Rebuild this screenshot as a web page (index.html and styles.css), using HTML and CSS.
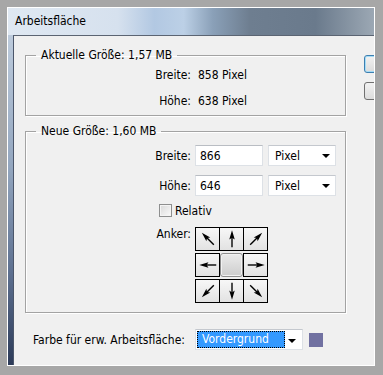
FILE: index.html
```html
<!DOCTYPE html>
<html lang="de">
<head>
    <meta charset="UTF-8">
    <title>Arbeitsfläche</title>
    <link rel="stylesheet" href="styles.css">
</head>
<body>

<svg class="defs" width="0" height="0" aria-hidden="true">
    <defs>
        <g id="arr">
            <line x1="12" y1="21" x2="12" y2="9" stroke="#000" stroke-width="1.5"/>
            <polygon points="12,2.5 9,12.5 12,10.5 15,12.5" fill="#000"/>
        </g>
    </defs>
</svg>

<div class="screen">
    <div class="window">
        <div class="titlebar">Arbeitsfläche</div>
        <div class="frame">
            <div class="frame-edge"></div>
            <div class="content">
                <div class="main">
                    <fieldset class="group group-current">
                        <legend>Aktuelle Größe: 1,57 MB</legend>
                        <div class="row">
                            <span class="label">Breite:</span>
                            <span class="value">858 Pixel</span>
                        </div>
                        <div class="row">
                            <span class="label">Höhe:</span>
                            <span class="value">638 Pixel</span>
                        </div>
                    </fieldset>

                    <fieldset class="group group-new">
                        <legend>Neue Größe: 1,60 MB</legend>
                        <div class="row row-input">
                            <label class="label" for="newW">Breite:</label>
                            <input class="num" type="text" id="newW" value="866">
                            <div class="combo">
                                <select><option>Pixel</option></select>
                            </div>
                        </div>
                        <div class="row row-input">
                            <label class="label" for="newH">Höhe:</label>
                            <input class="num" type="text" id="newH" value="646">
                            <div class="combo">
                                <select><option>Pixel</option></select>
                            </div>
                        </div>
                        <div class="row row-check">
                            <input type="checkbox" id="relativ">
                            <label for="relativ">Relativ</label>
                        </div>
                        <div class="row row-anchor">
                            <span class="label">Anker:</span>
                            <div class="anchor">
                                <div class="anchor-row">
                                    <span class="cell"><svg viewBox="0 0 24 24"><use href="#arr" transform="rotate(-45 12 12)"/></svg></span>
                                    <span class="cell"><svg viewBox="0 0 24 24"><use href="#arr"/></svg></span>
                                    <span class="cell"><svg viewBox="0 0 24 24"><use href="#arr" transform="rotate(45 12 12)"/></svg></span>
                                </div>
                                <div class="anchor-row">
                                    <span class="cell"><svg viewBox="0 0 24 24"><use href="#arr" transform="rotate(-90 12 12)"/></svg></span>
                                    <span class="cell center"></span>
                                    <span class="cell"><svg viewBox="0 0 24 24"><use href="#arr" transform="rotate(90 12 12)"/></svg></span>
                                </div>
                                <div class="anchor-row">
                                    <span class="cell"><svg viewBox="0 0 24 24"><use href="#arr" transform="rotate(-135 12 12)"/></svg></span>
                                    <span class="cell"><svg viewBox="0 0 24 24"><use href="#arr" transform="rotate(180 12 12)"/></svg></span>
                                    <span class="cell"><svg viewBox="0 0 24 24"><use href="#arr" transform="rotate(135 12 12)"/></svg></span>
                                </div>
                            </div>
                        </div>
                    </fieldset>

                    <div class="fill-row">
                        <span class="fill-label">Farbe für erw. Arbeitsfläche:</span>
                        <div class="combo combo-wide">
                            <span class="picked">Vordergrund</span>
                        </div>
                        <span class="swatch"></span>
                    </div>
                </div>

                <div class="buttons">
                    <button class="btn btn-default" aria-label="OK"></button>
                    <button class="btn" aria-label="Abbrechen"></button>
                </div>
            </div>
        </div>
    </div>
</div>

</body>
</html>
```

FILE: styles.css
```css
body {
    margin: 0;
    background-color: #a7a7a7;
    font-family: "DejaVu Sans Condensed", "DejaVu Sans", sans-serif;
    font-stretch: condensed;
    font-size: 12px;
    color: #000;
}

.defs {
    display: block;
    width: 0;
    height: 0;
}

.screen {
    width: 383px;
    height: 375px;
    box-sizing: border-box;
    padding: 7px 8px 9px 7px;
    overflow: hidden;
}

.window {
    height: 100%;
    box-sizing: border-box;
    border: 1px solid #fff;
    display: flex;
    flex-direction: column;
    overflow: hidden;
}

.titlebar {
    flex: none;
    height: 27px;
    line-height: 27px;
    padding-left: 7px;
    background: linear-gradient(90deg, #dfe8f2 0%, #d6e1ee 30%, #b2c8e2 40%, #bcd0e6 48%, #8aa0b8 56%, #6e7e90 66%, #6a7a8c 84%, #9ca8b4 100%);
}

.frame {
    flex: 1;
    display: flex;
    min-height: 0;
    min-width: 0;
}

.frame-edge {
    flex: none;
    width: 5px;
    background: linear-gradient(#bdcbdc, #93a6bf 40%, #5d7090 72%, #2c3a58);
}

.content {
    flex: 1;
    min-width: 0;
    display: flex;
    background-color: #f0f0f0;
    border-top: 1px solid #5b6472;
    border-left: 1px solid #4b566a;
    padding: 12px 0 0 11px;
    overflow: hidden;
}

.main {
    flex: none;
    width: 321px;
}

/* group boxes */
.group {
    margin: 0;
    padding: 0;
    border: 1px solid #a3a3a3;
    box-shadow: 1px 1px 0 #fff, inset 1px 1px 0 #fff;
}

.group legend {
    margin-left: 10px;
    padding: 0 5px;
    line-height: 14px;
}

.group-current {
    padding: 3px 0 4px;
}

.group-new {
    margin-top: 8px;
    padding: 7px 0 9px;
}

.row {
    display: flex;
    align-items: center;
}

.label {
    flex: none;
    width: 165px;
    text-align: right;
}

.group-current .row {
    height: 20px;
}

.group-current .row + .row {
    margin-top: 6px;
}

.value {
    margin-left: 7px;
}

.row-input {
    height: 21px;
}

.row-input + .row-input {
    margin-top: 9px;
}

.num {
    box-sizing: border-box;
    width: 68px;
    height: 21px;
    margin: 0 0 0 4px;
    padding: 0 4px;
    font: inherit;
    border: 1px solid #dde1e6;
    border-top-color: #b9bdc3;
    background-color: #fff;
}

.combo {
    position: relative;
    margin-left: 5px;
}

.combo select {
    appearance: none;
    box-sizing: border-box;
    width: 68px;
    height: 21px;
    margin: 0;
    padding: 0 0 0 6px;
    font: inherit;
    color: #000;
    border: 1px solid #dde1e6;
    border-top-color: #c4c8ce;
    border-radius: 0;
    background-color: #fff;
}

.combo::after {
    content: '';
    position: absolute;
    right: 6px;
    top: 9px;
    border-left: 4px solid transparent;
    border-right: 4px solid transparent;
    border-top: 4px solid #000;
}

.row-check {
    margin-top: 8px;
    height: 13px;
    padding-left: 133px;
}

.row-check input[type="checkbox"] {
    appearance: none;
    box-sizing: border-box;
    width: 13px;
    height: 13px;
    margin: 0 3px 0 0;
    border: 1px solid #8e8f8f;
    background: linear-gradient(135deg, #d8d8d8, #fbfbfb);
    box-shadow: inset 0 0 0 1px #f4f4f4;
}

.row-anchor {
    margin-top: 10px;
    align-items: flex-start;
}

.row-anchor .label {
    line-height: 12px;
    margin-top: 1px;
}

/* anchor grid */
.anchor {
    margin-left: 4px;
}

.anchor-row {
    display: flex;
}

.anchor-row + .anchor-row {
    margin-top: 2px;
}

.cell {
    box-sizing: border-box;
    width: 25px;
    height: 24px;
    border: 1px solid #000;
    background: linear-gradient(#f7f7f7, #e2e2e2);
    display: flex;
    align-items: center;
    justify-content: center;
}

.cell + .cell {
    margin-left: -1px;
}

.cell svg {
    width: 22px;
    height: 22px;
}

.cell.center {
    width: 23px;
    margin-left: 0;
    border-color: #8d8d8d;
    border-radius: 3px;
    background: linear-gradient(#ebebeb, #cdcdcd);
    box-shadow: inset 0 0 0 1px #f2f2f2;
}

.cell.center + .cell {
    margin-left: 0;
}

/* bottom row */
.fill-row {
    display: flex;
    align-items: center;
    margin-top: 16px;
    height: 21px;
    padding-left: 8px;
}

.fill-label {
    width: 162px;
}

.combo-wide {
    box-sizing: border-box;
    width: 108px;
    height: 21px;
    margin: 0;
    padding: 1px;
    border: 1px solid #dde1e6;
    border-top-color: #c4c8ce;
    background-color: #fff;
}

.picked {
    display: block;
    box-sizing: border-box;
    width: 88px;
    height: 17px;
    line-height: 15px;
    padding-left: 4px;
    color: #fff;
    background-color: #3399ff;
    border: 1px dotted #000;
}

.swatch {
    width: 14px;
    height: 14px;
    margin-left: 6px;
    background-color: #7171a1;
}

/* dialog buttons, mostly cut off */
.buttons {
    flex: none;
    margin-left: 18px;
    padding-top: 7px;
}

.btn {
    display: block;
    width: 75px;
    height: 18px;
    padding: 0;
    border: 1px solid #707070;
    border-radius: 3px;
    background: linear-gradient(#f2f2f2, #dcdcdc);
}

.btn + .btn {
    margin-top: 9px;
}

.btn-default {
    border-color: #3c7fb1;
    box-shadow: inset 0 0 0 1px #a6dcf6;
}
```
